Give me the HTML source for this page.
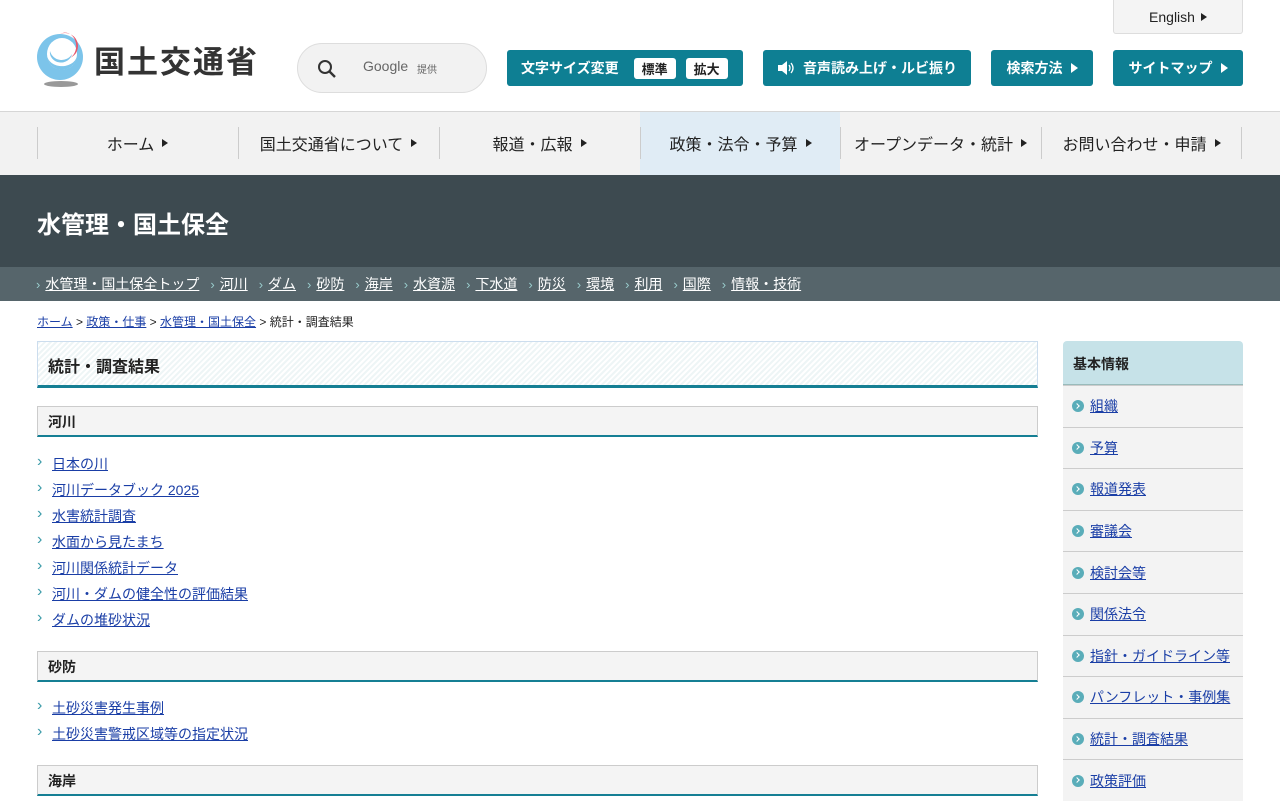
<!DOCTYPE html>
<html lang="ja"><head><meta charset="utf-8">
<style>
*{margin:0;padding:0;box-sizing:border-box}
body{width:1280px;height:800px;overflow:hidden;background:#fff;font-family:"Liberation Sans","Noto Sans CJK JP",sans-serif;color:#222}
a{color:#1a3ea6;text-decoration:underline}
.abs{position:absolute}
.btn{position:absolute;top:50px;height:36px;background:#0e7f93;color:#fff;border-radius:3px;font-size:14px;font-weight:bold;display:flex;align-items:center;justify-content:center}
.tri{display:inline-block;width:0;height:0;border-left:7px solid currentColor;border-top:5px solid transparent;border-bottom:5px solid transparent;margin-left:8px}
.nav{position:absolute;top:111px;left:0;width:1280px;height:64px;background:#f2f2f2;border-top:1px solid #d6d6d6}
.nav div{position:absolute;top:0;height:61px;width:201px;display:flex;align-items:center;justify-content:center;font-size:16px;color:#222}
.nav div .tri{border-left-width:6px;border-top-width:4px;border-bottom-width:4px;margin-left:8px}
.sep{position:absolute;top:15px;width:1px;height:32px;background:#ccc}
.sub{position:absolute;top:267px;left:0;width:1280px;height:34px;background:#56656b;font-size:14px;color:#fff;padding-left:36px;display:flex;align-items:center}
.sub a{color:#fff;margin-right:11px}
.sub span{color:#9cc;margin-right:5px;font-size:13px}
.h2{position:absolute;left:37px;width:1001px;height:31px;background:#f4f4f4;border:1px solid #ccc;border-bottom:2px solid #157f94;font-size:14px;font-weight:bold;padding:5px 10px}
ul{list-style:none;position:absolute;left:37px;font-size:14px}
li{height:26px;line-height:26px;padding-left:15px;position:relative}
li:before{content:"›";position:absolute;left:0;top:-2px;color:#3a9aa8;font-size:16px}
.side{position:absolute;left:1063px;top:341px;width:180px}
.side .hd{height:44px;background:#c6e2e8;border-radius:4px 4px 0 0;border-bottom:1px solid #9bb;font-weight:bold;font-size:14px;padding:13px 10px}
.side .it{height:41.6px;background:#f3f3f3;border-top:1px solid #ccc;font-size:14px;padding-left:9px;display:flex;align-items:center}
.side .it i{display:inline-block;width:12px;height:12px;border-radius:50%;background:#5aadb9;margin-right:6px;position:relative}
.side .it i:after{content:"";position:absolute;left:3px;top:3.5px;width:3px;height:3px;border-right:1.3px solid #fff;border-top:1.3px solid #fff;transform:rotate(45deg)}
</style></head><body>
<svg class="abs" style="left:36px;top:32px" width="50" height="56" viewBox="0 0 50 56">
<circle cx="24" cy="25" r="23" fill="#7cc4ea"/>
<ellipse cx="26" cy="22" rx="15" ry="16" fill="#fff"/>
<path d="M11 20 a15 16 0 0 0 30 4 a15 12 0 0 1-30-4z" fill="#7cc4ea"/>
<ellipse cx="27" cy="18" rx="10" ry="11" fill="#fff"/>
<path d="M14 19 a12 12 0 0 0 22 3 a10 9 0 0 1-22-3z" fill="#7cc4ea"/>
<path d="M24 2 a13 13 0 0 1 10 24 a10 12 0 0 0-10-24z" fill="#e8566a"/>
<ellipse cx="27" cy="17" rx="6" ry="8" fill="#fff"/>
<ellipse cx="25" cy="52" rx="17" ry="3" fill="#999"/>
</svg>
<div class="abs" style="left:94px;top:37px;font-size:31px;font-weight:bold;color:#333;letter-spacing:2px">国土交通省</div>
<div class="abs" style="left:297px;top:43px;width:190px;height:50px;border:1px solid #ddd;border-radius:25px;background:#f2f2f2">
<svg class="abs" style="left:19px;top:15px" width="20" height="20" viewBox="0 0 20 20"><circle cx="8" cy="8" r="6" fill="none" stroke="#333" stroke-width="2"/><path d="M12.5 12.5 L18 18" stroke="#333" stroke-width="2.4"/></svg>
<span class="abs" style="left:65px;top:14px;font-size:14px;color:#666">Google</span><span class="abs" style="left:119px;top:17px;font-size:10px;color:#666">提供</span></div>
<div class="abs" style="left:1113px;top:0;width:130px;height:34px;background:#f4f4f4;border:1px solid #ddd;border-top:none;border-radius:0 0 3px 3px;font-size:14px;display:flex;align-items:center;justify-content:center">English<span class="tri" style="border-left-width:6px;border-top-width:4px;border-bottom-width:4px;margin-left:6px"></span></div>
<div class="btn" style="left:507px;width:236px;justify-content:flex-start;padding-left:14px">文字サイズ変更<span style="background:#fff;color:#222;border-radius:3px;padding:1px 8px;margin-left:15px;font-size:13px">標準</span><span style="background:#fff;color:#222;border-radius:3px;padding:1px 8px;margin-left:10px;font-size:13px">拡大</span></div>
<div class="btn" style="left:763px;width:208px"><svg width="18" height="16" viewBox="0 0 18 16" style="margin-right:8px"><path d="M1 5h4l5-4v14l-5-4H1z" fill="#fff"/><path d="M12 5q2 3 0 6M14 3q4 5 0 10" stroke="#fff" fill="none" stroke-width="1.3"/></svg>音声読み上げ・ルビ振り</div>
<div class="btn" style="left:991px;width:102px">検索方法<span class="tri"></span></div>
<div class="btn" style="left:1113px;width:130px">サイトマップ<span class="tri"></span></div>
<div class="nav">
<div style="left:640px;width:200px;background:#e0ecf5;height:63px"></div>
<span class="sep" style="left:37px"></span><span class="sep" style="left:238px"></span><span class="sep" style="left:439px"></span><span class="sep" style="left:640px"></span><span class="sep" style="left:840px"></span><span class="sep" style="left:1041px"></span><span class="sep" style="left:1241px"></span>
<div style="left:37px">ホーム<span class="tri"></span></div>
<div style="left:238px">国土交通省について<span class="tri"></span></div>
<div style="left:439px">報道・広報<span class="tri"></span></div>
<div style="left:640px">政策・法令・予算<span class="tri"></span></div>
<div style="left:840px">オープンデータ・統計<span class="tri"></span></div>
<div style="left:1041px">お問い合わせ・申請<span class="tri"></span></div>
</div>
<div class="abs" style="left:0;top:175px;width:1280px;height:92px;background:#3d4a50"><div style="position:absolute;left:37px;top:30px;font-size:24px;font-weight:bold;color:#fff">水管理・国土保全</div></div>
<div class="sub"><span>›</span><a>水管理・国土保全トップ</a><span>›</span><a>河川</a><span>›</span><a>ダム</a><span>›</span><a>砂防</a><span>›</span><a>海岸</a><span>›</span><a>水資源</a><span>›</span><a>下水道</a><span>›</span><a>防災</a><span>›</span><a>環境</a><span>›</span><a>利用</a><span>›</span><a>国際</a><span>›</span><a>情報・技術</a></div>
<div class="abs" style="left:37px;top:313px;font-size:12px"><a>ホーム</a> &gt; <a>政策・仕事</a> &gt; <a>水管理・国土保全</a> &gt; 統計・調査結果</div>
<div class="abs" style="left:37px;top:341px;width:1001px;height:47px;border:1px solid #cde;border-bottom:3px solid #157f94;background:repeating-linear-gradient(135deg,#eef5f6 0 2px,#fff 2px 4px);font-size:16px;font-weight:bold;padding:11px 10px">統計・調査結果</div>
<div class="h2" style="top:406px">河川</div>
<ul style="top:451px"><li><a>日本の川</a></li><li><a>河川データブック 2025</a></li><li><a>水害統計調査</a></li><li><a>水面から見たまち</a></li><li><a>河川関係統計データ</a></li><li><a>河川・ダムの健全性の評価結果</a></li><li><a>ダムの堆砂状況</a></li></ul>
<div class="h2" style="top:651px">砂防</div>
<ul style="top:695px"><li><a>土砂災害発生事例</a></li><li><a>土砂災害警戒区域等の指定状況</a></li></ul>
<div class="h2" style="top:765px">海岸</div>
<div class="side"><div class="hd">基本情報</div>
<div class="it"><i></i><a>組織</a></div><div class="it"><i></i><a>予算</a></div><div class="it"><i></i><a>報道発表</a></div><div class="it"><i></i><a>審議会</a></div><div class="it"><i></i><a>検討会等</a></div><div class="it"><i></i><a>関係法令</a></div><div class="it"><i></i><a>指針・ガイドライン等</a></div><div class="it"><i></i><a>パンフレット・事例集</a></div><div class="it"><i></i><a>統計・調査結果</a></div><div class="it"><i></i><a>政策評価</a></div></div>
</body></html>
